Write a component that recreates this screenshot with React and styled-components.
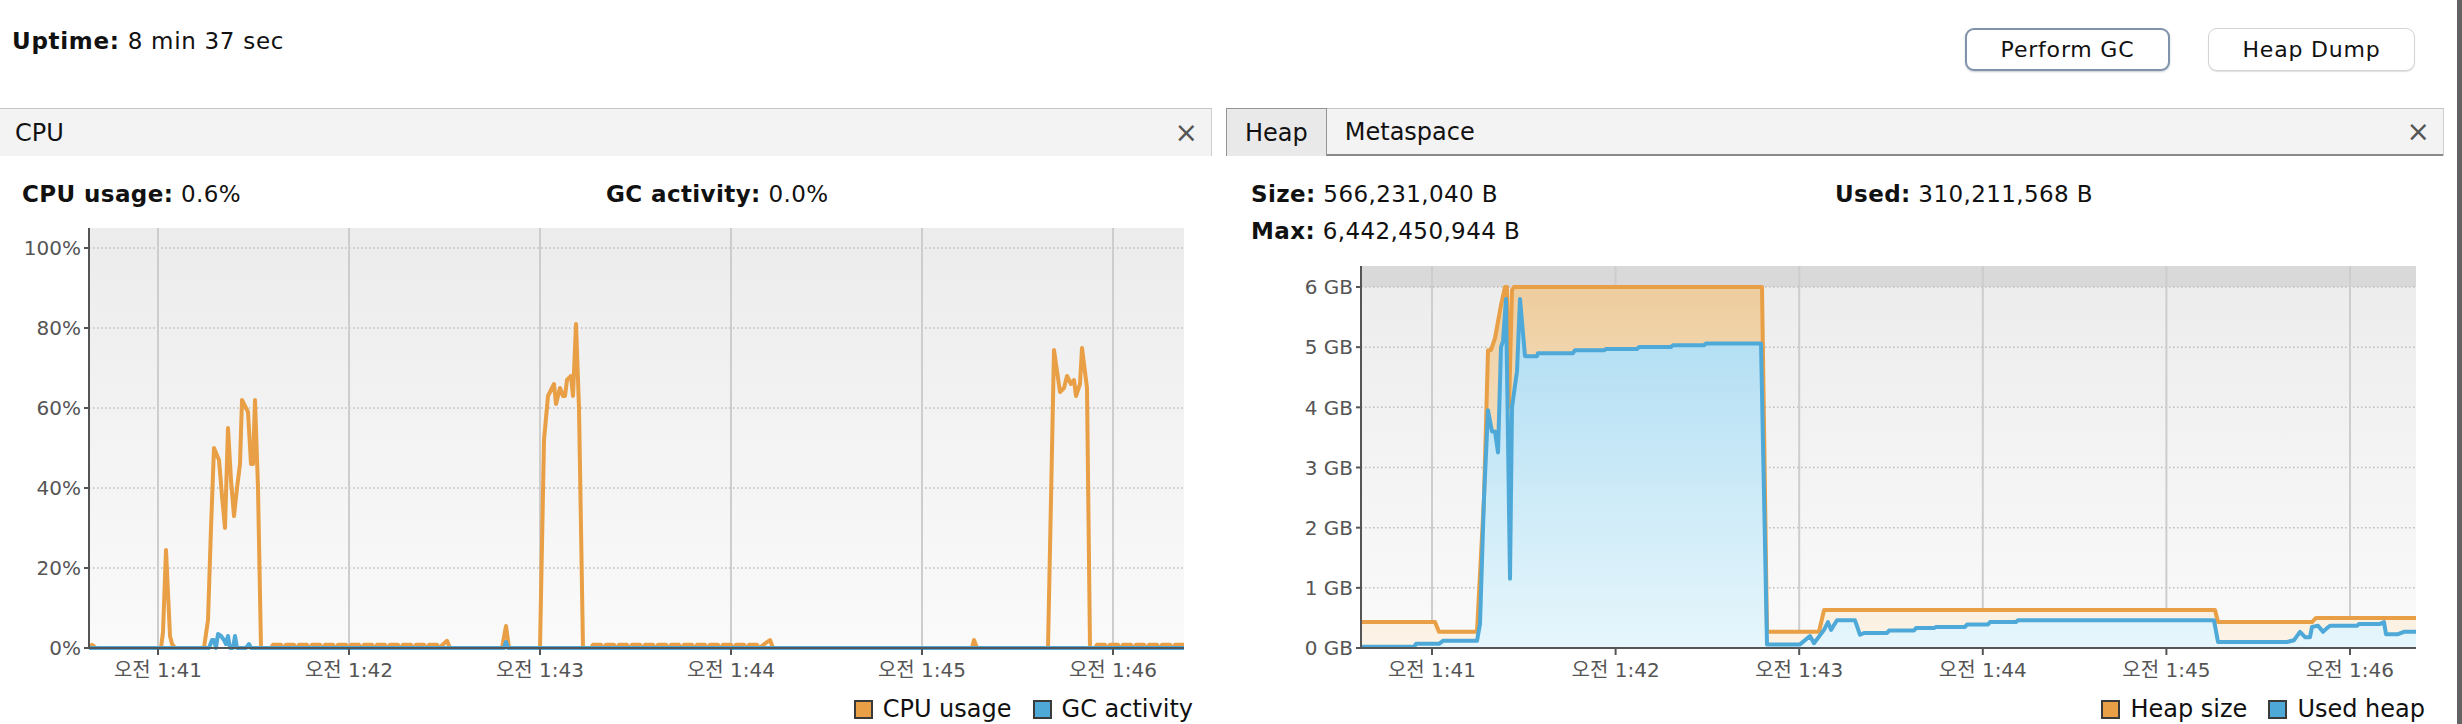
import React from 'react'
import styled, { createGlobalStyle, css } from 'styled-components'

const font = `"DejaVu Sans", "Noto Sans CJK KR", sans-serif`

const orange = '#e89f45'
const blue = '#4ea9d8'

const GlobalStyle = createGlobalStyle`
    html, body {
        margin: 0;
        padding: 0;
        background: #fff;
    }

    body {
        font-family: ${font};
        color: #111;
    }
`

const Root = styled.div`
    display: flex;
    width: 2462px;
    height: 724px;
    overflow: hidden;
    background: #fff;
`

const Main = styled.div`
    flex: 1;
    min-width: 0;
    display: flex;
    flex-direction: column;
`

const Edge = styled.div`
    width: 5px;
    background: #636363;
`

const Header = styled.header`
    display: flex;
    justify-content: space-between;
    align-items: flex-start;
    height: 108px;
    padding: 27px 42px 0 12px;
    box-sizing: border-box;
`

const Uptime = styled.div`
    font-size: 23px;
    line-height: 28px;
    letter-spacing: 0.7px;
`

const Key = styled.span`
    font-weight: 700;
`

const Buttons = styled.div`
    display: flex;
    gap: 38px;
    margin-top: 1px;
`

const Button = styled.button`
    height: 43px;
    width: ${p => p.$width}px;
    box-sizing: border-box;
    border-radius: 9px;
    border: 1px solid #d4d4d4;
    background: #fff;
    box-shadow: 0 1px 1px rgba(0, 0, 0, 0.12);
    font-family: ${font};
    font-size: 22px;
    letter-spacing: 0.8px;
    color: #111;
    padding: 0;

    ${p => p.$focused && css`
        border: 2px solid #8193ab;
        box-shadow: 0 1px 2px rgba(60, 80, 110, 0.3);
    `}
`

const Panels = styled.div`
    flex: 1;
    display: flex;
    gap: 14px;
    padding-right: 13px;
`

const Panel = styled.section`
    width: ${p => p.$width}px;
    display: flex;
    flex-direction: column;
`

const TitleBar = styled.div`
    height: 48px;
    box-sizing: border-box;
    display: flex;
    align-items: center;
    justify-content: space-between;
    padding: 0 13px 0 15px;
    background: #f3f3f3;
    border-top: 1px solid #c6c6c6;
    border-right: 1px solid #cdcdcd;
    font-size: 24px;
`

const TabBar = styled.div`
    height: 48px;
    box-sizing: border-box;
    display: flex;
    align-items: stretch;
    background: #f3f3f3;
    border-top: 1px solid #c6c6c6;
    border-right: 1px solid #cdcdcd;
    font-size: 24px;
`

const Tab = styled.div`
    display: flex;
    align-items: center;
    padding: 0 18px;
    box-sizing: border-box;

    ${p => p.$active ? css`
        background: #e9e9e9;
        border: 1px solid #959595;
        border-bottom: none;
        margin-top: -1px;
    ` : css`
        flex: 1;
        border-bottom: 2px solid #8a8a8a;
    `}
`

const TabRest = styled.div`
    display: flex;
    align-items: center;
    padding-right: 13px;
    border-bottom: 2px solid #8a8a8a;
`

const Close = styled.span`
    font-size: 28px;
    line-height: 1;
    color: #555;
`

const Stats = styled.div`
    display: grid;
    grid-template-columns: 584px 1fr;
    row-gap: 9px;
    padding: 24px 0 0 ${p => p.$left}px;
    font-size: 23px;
    line-height: 28px;
    letter-spacing: 0.4px;
`

const Svg = styled.svg`
    display: block;
    flex: none;
`

const Legend = styled.div`
    display: flex;
    justify-content: flex-end;
    gap: 21px;
    padding: 7px 19px 0 0;
    font-size: 24px;
    line-height: 24px;
`

const LegendItem = styled.div`
    display: flex;
    align-items: flex-start;
    gap: 10px;
`

const Swatch = styled.span`
    width: 19px;
    height: 19px;
    margin-top: 3px;
    box-sizing: border-box;
    border: 2px solid #3a3a3a;
    background: ${p => p.$color};
`

function flicker(from, to) {
    const pts = []
    for (let x = from; x + 12 <= to; x += 13) {
        pts.push([x, 0], [x + 2, 0.8], [x + 10, 0.8], [x + 12, 0])
    }
    return pts
}

const cpuUsage = [
    [89, 0], [92, 0.8], [96, 0], [161, 0], [163, 4], [166, 24.5], [170, 3], [172, 1], [175, 0],
    [204, 0], [208, 7], [211, 30], [214, 50], [219, 47], [222, 38], [225, 30], [228, 55], [231, 42],
    [234, 33], [237, 40], [240, 46], [242, 62], [248, 59], [251, 46], [253, 46], [255, 62], [258, 40], [261, 0],
    ...flicker(271, 446), [447, 1.8], [450, 0],
    [502, 0], [506, 5.5], [509, 0],
    [540, 0], [544, 52], [548, 63], [552, 65], [554, 66], [556, 61], [560, 65], [563, 63], [565, 63],
    [567, 67], [571, 68], [573, 63], [576, 81], [579, 60], [583, 0],
    ...flicker(591, 768), [770, 2], [773, 0],
    [972, 0], [974, 2], [977, 0],
    [1048, 0], [1054, 74.5], [1060, 64], [1064, 65], [1067, 68], [1071, 66], [1074, 67], [1076, 63],
    [1080, 66], [1082, 75], [1087, 65], [1090, 0],
    ...flicker(1095, 1190)
]

const gcActivity = [
    [89, 0], [209, 0], [212, 2], [214, 2], [216, 0], [218, 3.5], [221, 3], [224, 2], [226, 1],
    [228, 3], [230, 0], [233, 0], [235, 3], [237, 0], [246, 0], [249, 1], [251, 0],
    [504, 0], [506, 1.5], [508, 0], [1190, 0]
]

const heapSize = [
    [1361, 0.43], [1435, 0.43], [1439, 0.27], [1477, 0.27], [1484, 2.5], [1488, 4.95], [1491, 4.95],
    [1495, 5.15], [1501, 5.7], [1505, 6], [1507, 6], [1509, 4], [1512, 5.95], [1514, 6],
    [1762, 6], [1767, 0.27], [1819, 0.27], [1824, 0.63], [2215, 0.63], [2218, 0.43],
    [2312, 0.43], [2316, 0.5], [2420, 0.5]
]

const usedHeap = [
    [1361, 0.02], [1414, 0.02], [1416, 0.07], [1439, 0.07], [1443, 0.12], [1477, 0.12], [1480, 0.4],
    [1484, 2.5], [1488, 3.95], [1492, 3.6], [1495, 3.6], [1498, 3.25], [1501, 5], [1503, 5.1],
    [1506, 5.8], [1510, 1.15], [1512, 4], [1517, 4.6], [1520, 5.8], [1525, 4.85], [1537, 4.85],
    [1538, 4.9], [1573, 4.9], [1575, 4.95], [1604, 4.95], [1606, 4.97], [1637, 4.97], [1639, 5],
    [1671, 5], [1673, 5.03], [1704, 5.03], [1706, 5.06], [1761, 5.06], [1767, 0.06], [1800, 0.06],
    [1810, 0.2], [1814, 0.08], [1824, 0.3], [1828, 0.43], [1831, 0.3], [1837, 0.46], [1855, 0.46],
    [1860, 0.22], [1864, 0.25], [1887, 0.25], [1889, 0.29], [1914, 0.29], [1916, 0.33], [1934, 0.33],
    [1936, 0.35], [1965, 0.35], [1967, 0.39], [1988, 0.39], [1990, 0.43], [2016, 0.43], [2018, 0.46],
    [2214, 0.46], [2218, 0.1], [2287, 0.1], [2294, 0.13], [2300, 0.27], [2305, 0.18], [2310, 0.18],
    [2312, 0.35], [2318, 0.37], [2323, 0.27], [2327, 0.33], [2330, 0.37], [2357, 0.37], [2359, 0.4],
    [2380, 0.4], [2384, 0.43], [2386, 0.23], [2398, 0.23], [2404, 0.27], [2420, 0.27]
]

const times = ['오전 1:41', '오전 1:42', '오전 1:43', '오전 1:44', '오전 1:45', '오전 1:46']

function Chart({ name, width, height, offset, plot, scale, yTicks, xTicks, band, series }) {
    const px = x => x - offset
    const py = v => plot.bottom - v * scale
    const line = pts => pts
        .map(([x, v], i) => `${i ? 'L' : 'M'}${px(x).toFixed(1)},${py(v).toFixed(1)}`)
        .join(' ')
    const area = pts => `${line(pts)} L${px(pts[pts.length - 1][0])},${plot.bottom} L${px(pts[0][0])},${plot.bottom} Z`
    const plotW = plot.right - plot.left
    const plotH = plot.bottom - plot.top

    return (
        <Svg width={width} height={height}>
            <defs>
                <linearGradient id={`${name}-bg`} x1="0" y1={plot.top} x2="0" y2={plot.bottom} gradientUnits="userSpaceOnUse">
                    <stop offset="0" stopColor="#ececec" />
                    <stop offset="1" stopColor="#fafafa" />
                </linearGradient>
                {series.filter(s => s.fill).map((s, i) => (
                    <linearGradient key={i} id={`${name}-fill-${i}`} x1="0" y1={py(band || 0)} x2="0" y2={plot.bottom} gradientUnits="userSpaceOnUse">
                        <stop offset="0" stopColor={s.fill[0]} />
                        <stop offset="1" stopColor={s.fill[1]} />
                    </linearGradient>
                ))}
                <clipPath id={`${name}-clip`}>
                    <rect x={plot.left} y={plot.top} width={plotW} height={plotH + 2} />
                </clipPath>
            </defs>

            <rect x={plot.left} y={plot.top} width={plotW} height={plotH} fill={`url(#${name}-bg)`} />
            {band && (
                <rect x={plot.left} y={plot.top} width={plotW} height={py(band) - plot.top} fill="#d9d9d9" />
            )}

            {yTicks.map(t => (
                <line key={t.label} x1={plot.left} x2={plot.right} y1={py(t.value)} y2={py(t.value)}
                    stroke="#bdbdbd" strokeWidth="1.5" strokeDasharray="1.5 2.5" />
            ))}
            {xTicks.map(t => (
                <line key={t.label} x1={px(t.x)} x2={px(t.x)} y1={plot.top} y2={plot.bottom}
                    stroke="#cdcdcd" strokeWidth="2" />
            ))}

            <g clipPath={`url(#${name}-clip)`}>
                {series.filter(s => s.fill).map((s, i) => (
                    <path key={i} d={area(s.points)} fill={`url(#${name}-fill-${i})`} />
                ))}
                {series.map((s, i) => (
                    <path key={i} d={line(s.points)} fill="none" stroke={s.color}
                        strokeWidth="4" strokeLinejoin="round" />
                ))}
            </g>

            <line x1={plot.left} x2={plot.left} y1={plot.top} y2={plot.bottom + 1} stroke="#555" strokeWidth="2" />
            <line x1={plot.left} x2={plot.right} y1={plot.bottom} y2={plot.bottom} stroke="#555" strokeWidth="2" />

            {yTicks.map(t => (
                <g key={t.label}>
                    <line x1={plot.left - 5} x2={plot.left} y1={py(t.value)} y2={py(t.value)} stroke="#555" strokeWidth="2" />
                    <text x={plot.left - 8} y={py(t.value)} dy="0.36em" textAnchor="end"
                        fontFamily={font} fontSize="20" fill="#555">{t.label}</text>
                </g>
            ))}
            {xTicks.map(t => (
                <g key={t.label}>
                    <line x1={px(t.x)} x2={px(t.x)} y1={plot.bottom} y2={plot.bottom + 7} stroke="#555" strokeWidth="2" />
                    <text x={px(t.x)} y={plot.bottom + 22} dy="0.36em" textAnchor="middle"
                        fontFamily={font} fontSize="20" fill="#555">{t.label}</text>
                </g>
            ))}
        </Svg>
    )
}

const cpuYTicks = [0, 20, 40, 60, 80, 100].map(v => ({ value: v, label: `${v}%` }))
const heapYTicks = [0, 1, 2, 3, 4, 5, 6].map(v => ({ value: v, label: `${v} GB` }))
const cpuXTicks = times.map((label, i) => ({ label, x: 158 + i * 191 }))
const heapXTicks = times.map((label, i) => ({ label, x: 1432 + i * 183.6 }))

function App() {
    return (
        <Root>
            <GlobalStyle />
            <Main>
                <Header>
                    <Uptime><Key>Uptime:</Key> 8 min 37 sec</Uptime>
                    <Buttons>
                        <Button $width={205} $focused>Perform GC</Button>
                        <Button $width={207}>Heap Dump</Button>
                    </Buttons>
                </Header>

                <Panels>
                    <Panel $width={1212}>
                        <TitleBar>
                            <span>CPU</span>
                            <Close>×</Close>
                        </TitleBar>
                        <Stats $left={22}>
                            <div><Key>CPU usage:</Key> 0.6%</div>
                            <div><Key>GC activity:</Key> 0.0%</div>
                        </Stats>
                        <Chart
                            name="cpu"
                            width={1212}
                            height={482}
                            offset={0}
                            plot={{ left: 89, right: 1184, top: 20, bottom: 440 }}
                            scale={4}
                            yTicks={cpuYTicks}
                            xTicks={cpuXTicks}
                            series={[
                                { points: cpuUsage, color: orange },
                                { points: gcActivity, color: blue }
                            ]}
                        />
                        <Legend>
                            <LegendItem><Swatch $color={orange} />CPU usage</LegendItem>
                            <LegendItem><Swatch $color={blue} />GC activity</LegendItem>
                        </Legend>
                    </Panel>

                    <Panel $width={1218}>
                        <TabBar>
                            <Tab $active>Heap</Tab>
                            <Tab>Metaspace</Tab>
                            <TabRest><Close>×</Close></TabRest>
                        </TabBar>
                        <Stats $left={25}>
                            <div><Key>Size:</Key> 566,231,040 B</div>
                            <div><Key>Used:</Key> 310,211,568 B</div>
                            <div><Key>Max:</Key> 6,442,450,944 B</div>
                        </Stats>
                        <Chart
                            name="heap"
                            width={1218}
                            height={445}
                            offset={1226}
                            plot={{ left: 135, right: 1190, top: 21, bottom: 403 }}
                            scale={60.17}
                            band={6}
                            yTicks={heapYTicks}
                            xTicks={heapXTicks}
                            series={[
                                { points: heapSize, color: orange, fill: ['#eecd9e', '#fcf4e8'] },
                                { points: usedHeap, color: blue, fill: ['#abdbf2', '#e6f6fc'] }
                            ]}
                        />
                        <Legend>
                            <LegendItem><Swatch $color={orange} />Heap size</LegendItem>
                            <LegendItem><Swatch $color={blue} />Used heap</LegendItem>
                        </Legend>
                    </Panel>
                </Panels>
            </Main>
            <Edge />
        </Root>
    )
}

export default App
